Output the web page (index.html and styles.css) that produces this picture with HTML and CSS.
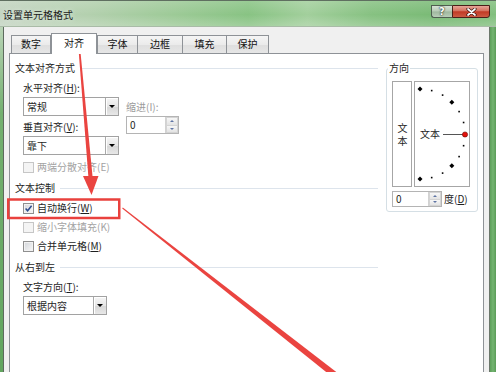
FILE: index.html
```html
<!DOCTYPE html>
<html lang="zh-CN">
<head>
<meta charset="utf-8">
<title>设置单元格格式</title>
<link rel="stylesheet" href="styles.css">
</head>
<body>
<div class="window">
  <div class="titlebar">
    <span class="title">设置单元格格式</span>
    <div class="caption">
      <span class="btn-help">?</span>
      <span class="btn-close">
        <svg width="11" height="8" viewBox="0 0 11 8"><path d="M2 1 L9 7 M9 1 L2 7" stroke="#3a1510" stroke-width="3.2" stroke-linecap="round"/><path d="M2 1 L9 7 M9 1 L2 7" stroke="#fff" stroke-width="1.7" stroke-linecap="round"/></svg>
      </span>
    </div>
  </div>
  <div class="frame">
    <div class="edge-left"></div>
    <div class="client">
      <div class="tabs">
        <span class="tab t1">数字</span>
        <span class="tab t2 active">对齐</span>
        <span class="tab t3">字体</span>
        <span class="tab t4">边框</span>
        <span class="tab t5">填充</span>
        <span class="tab t6">保护</span>
      </div>
      <div class="panel">
        <div class="left-col">
          <div class="sec-head"><span>文本对齐方式</span><i class="rule"></i></div>
          <div class="align-grid">
            <div class="col-a">
              <div class="lbl">水平对齐(<u>H</u>):</div>
              <div class="combo mt3"><span class="combo-text">常规</span><span class="combo-btn"></span></div>
              <div class="lbl mt5">垂直对齐(<u>V</u>):</div>
              <div class="combo mt3"><span class="combo-text">靠下</span><span class="combo-btn"></span></div>
              <div class="check disabled mt6"><span class="box"></span><span>两端分散对齐(E)</span></div>
            </div>
            <div class="col-b">
              <div class="lbl dim">缩进(I):</div>
              <div class="spin indent-spin mt3"><span class="spin-text">0</span><span class="spin-btns"><i class="up"></i><i class="down"></i></span></div>
            </div>
          </div>
          <div class="sec-head mt9"><span>文本控制</span><i class="rule"></i></div>
          <div class="check indent mt8"><span class="box checked"><svg width="9" height="9" viewBox="0 0 9 9"><path d="M1.6 4.6 L3.6 6.8 L7.6 1.8" fill="none" stroke="#2d4b8e" stroke-width="1.5"/></svg></span><span>自动换行(<u>W</u>)</span></div>
          <div class="check indent disabled mt7"><span class="box"></span><span>缩小字体填充(K)</span></div>
          <div class="check indent mt7"><span class="box"></span><span>合并单元格(<u>M</u>)</span></div>
          <div class="sec-head mt9"><span>从右到左</span><i class="rule"></i></div>
          <div class="lbl indent mt8">文字方向(<u>T</u>):</div>
          <div class="combo indent dir-combo mt3"><span class="combo-text">根据内容</span><span class="combo-btn"></span></div>
        </div>
        <fieldset class="orient">
          <legend>方向</legend>
          <div class="orient-row">
            <div class="vbox"><span class="vtext">文本</span></div>
            <div class="arcbox">
              <svg width="54" height="104" viewBox="0 0 54 104">
                <text x="5" y="56" font-size="10" fill="#1e1e1e">文本</text>
                <line x1="28" y1="52.5" x2="48" y2="52.5" stroke="#555" stroke-width="1"/>
                <g fill="#000">
                  <path d="M5 4.5 L7.5 7 L5 9.5 L2.5 7Z"/>
                  <path d="M36.8 17.7 L39.3 20.2 L36.8 22.7 L34.3 20.2Z"/>
                  <path d="M36.8 81.3 L39.3 83.8 L36.8 86.3 L34.3 83.8Z"/>
                  <path d="M5 94.5 L7.5 97 L5 99.5 L2.5 97Z"/>
                  <rect x="15.9" y="7.8" width="1.6" height="1.6"/>
                  <rect x="26.8" y="12.3" width="1.6" height="1.6"/>
                  <rect x="43.3" y="28.8" width="1.6" height="1.6"/>
                  <rect x="47.8" y="39.7" width="1.6" height="1.6"/>
                  <rect x="47.8" y="62.9" width="1.6" height="1.6"/>
                  <rect x="43.3" y="73.8" width="1.6" height="1.6"/>
                  <rect x="26.8" y="90.3" width="1.6" height="1.6"/>
                  <rect x="15.9" y="94.8" width="1.6" height="1.6"/>
                </g>
                <circle cx="50" cy="52.5" r="2.6" fill="#e3120c" stroke="#6a0c08" stroke-width="0.6"/>
              </svg>
            </div>
          </div>
          <div class="deg-row">
            <div class="spin deg-spin"><span class="spin-text">0</span><span class="spin-btns"><i class="up"></i><i class="down"></i></span></div>
            <span>度(<u>D</u>)</span>
          </div>
        </fieldset>
      </div>
    </div>
    <div class="edge-right"></div>
  </div>
</div>
<svg class="annot" width="496" height="372" viewBox="0 0 496 372">
  <rect x="8.25" y="199.5" width="111" height="18.5" fill="none" stroke="#e9413d" stroke-width="2.5"/>
  <polygon points="78.2,45 79.8,45 92.6,177 88.4,177" fill="#ea4440"/>
  <polygon points="83,176 98.5,176 91.5,195" fill="#ea4440"/>
  <polygon points="122.8,207.6 344.6,378.4 340.6,383.6 122.2,208.4" fill="#ea4440"/>
</svg>
</body>
</html>
```
FILE: styles.css
```css
* { box-sizing: border-box; }
html, body { margin: 0; padding: 0; }
body {
  width: 496px;
  height: 372px;
  overflow: hidden;
  position: relative;
  font-family: "Noto Sans CJK SC", "Noto Sans", sans-serif;
  font-size: 10px;
  line-height: 12px;
  color: #1e1e1e;
  background: #f0f0f0;
}
u { text-decoration: underline; text-underline-offset: 1px; }

.window { display: flex; flex-direction: column; width: 496px; height: 372px; }

.titlebar {
  flex: none;
  height: 27px;
  display: flex;
  align-items: flex-start;
  border-top: 1px solid #5f6f60;
  border-bottom: 1px solid #a9bba7;
  background:
    linear-gradient(to bottom, rgba(255,255,255,0.15), rgba(255,255,255,0) 55%, rgba(255,255,255,0.2)),
    linear-gradient(to right, #c3d4c1 0%, #b3d0ae 18%, #9dca97 35%, #88c383 50%, #a2cf9c 62%, #86c181 75%, #79ba75 88%, #82bf7e 100%);
}
.title {
  margin: 8px 0 0 3px;
  color: #1a1a1a;
  text-shadow: 0 0 5px rgba(255,255,255,0.7);
}
.caption { margin: 4px 6px 0 auto; display: flex; }
.btn-help {
  width: 21px;
  height: 13px;
  border: 1px solid #4f5e50;
  border-right: none;
  border-radius: 0 0 0 3px;
  background: linear-gradient(#d6e2d5, #b7cab6 48%, #9fb79e 52%, #b9cdb8);
  color: #fff;
  font: bold 10px/11px "DejaVu Sans", sans-serif;
  text-align: center;
  text-shadow: 0 0 2px #1c2a1c, 0 0 1px #1c2a1c;
}
.btn-close {
  width: 38px;
  height: 13px;
  border: 1px solid #4a1f18;
  border-radius: 0 0 3px 0;
  background: linear-gradient(#e6a597, #d4705d 45%, #c13a25 52%, #cc5a43);
  display: flex;
  align-items: center;
  justify-content: center;
}

.frame { flex: 1; display: flex; min-height: 0; }
.edge-left {
  flex: none;
  width: 4px;
  border-right: 1px solid #5d6a5e;
  background: linear-gradient(#b9d4b6, #74b070 25%, #62a55f);
}
.edge-right {
  flex: none;
  width: 7px;
  border-left: 1px solid #6b776b;
  background: linear-gradient(to right, #5c9f59, #74b471 50%, #5a9c57);
}
.client {
  flex: 1;
  background: #f0f0f0;
  padding: 6px 5px 0 5px;
  display: flex;
  flex-direction: column;
}

.tabs {
  display: flex;
  align-items: flex-end;
  height: 20px;
  padding-left: 2px;
}
.tab {
  height: 18px;
  line-height: 16px;
  text-align: center;
  border: 1px solid #8e9297;
  border-bottom: none;
  background: linear-gradient(#f5f5f5, #ebebeb 50%, #dedede 51%, #e6e6e6);
  color: #111;
}
.tab.t4, .tab.t5, .tab.t6 { border-left: none; }
.tab.active {
  position: relative;
  z-index: 1;
  height: 21px;
  line-height: 18px;
  margin-bottom: -1px;
  background: #fff;
}
.t1 { width: 40px; }
.t2 { width: 46px; }
.t3 { width: 41px; }
.t4 { width: 45px; }
.t5 { width: 44px; }
.t6 { width: 42px; }

.panel {
  flex: none;
  height: 330px;
  background: #fff;
  border: 1px solid #8e9297;
  padding: 8px 5px 0 5px;
  display: grid;
  grid-template-columns: 363px 92px;
  column-gap: 8px;
  align-items: start;
}

.sec-head { display: flex; align-items: center; gap: 5px; height: 12px; }
.sec-head .rule { flex: 1; height: 1px; background: #dde4ec; }

.lbl { height: 12px; white-space: nowrap; }
.dim { color: #9b9b9b; }
.indent { margin-left: 8px; }
.mt3 { margin-top: 3px; }
.mt5 { margin-top: 5px; }
.mt6 { margin-top: 6px; }
.mt7 { margin-top: 7px; }
.mt8 { margin-top: 8px; }
.mt9 { margin-top: 9px; }

.align-grid { display: flex; gap: 7px; margin: 8px 0 0 8px; }
.col-a { width: 96px; }
.col-b { padding-top: 19px; }

.combo {
  display: flex;
  height: 19px;
  border: 1px solid #a2a2a2;
  background: #fff;
}
.dir-combo { width: 84px; }
.combo-text { flex: 1; padding-left: 3px; line-height: 17px; }
.combo-btn {
  width: 13px;
  border-left: 1px solid #a9a9a9;
  background: linear-gradient(#f6f6f6, #e6e6e6 50%, #d6d6d6 51%, #e8e8e8);
  box-shadow: inset 1px 1px 0 #fff;
  display: flex;
  align-items: center;
  justify-content: center;
}
.combo-btn::after {
  content: "";
  border-left: 3px solid transparent;
  border-right: 3px solid transparent;
  border-top: 3px solid #000;
}

.spin {
  display: flex;
  border: 1px solid #b4b4b4;
  background: #fff;
}
.indent-spin { width: 53px; height: 18px; }
.deg-spin { width: 50px; height: 16px; }
.spin-text { flex: 1; padding-left: 3px; line-height: 14px; }
.indent-spin .spin-text { line-height: 16px; }
.spin-btns {
  width: 13px;
  display: flex;
  flex-direction: column;
  border-left: 1px solid #d2d2d2;
}
.spin-btns i {
  flex: 1;
  display: flex;
  align-items: center;
  justify-content: center;
  background: linear-gradient(#f7f7f7, #e3e3e3);
  border: 1px solid #d4d4d4;
}
.spin-btns i + i { border-top: none; }
.spin-btns .up::after {
  content: "";
  border-left: 2px solid transparent;
  border-right: 2px solid transparent;
  border-bottom: 2px solid #5e74a4;
}
.spin-btns .down::after {
  content: "";
  border-left: 2px solid transparent;
  border-right: 2px solid transparent;
  border-top: 2px solid #5e74a4;
}

.check { display: flex; align-items: center; gap: 3px; height: 12px; white-space: nowrap; }
.check .box {
  flex: none;
  width: 11px;
  height: 11px;
  border: 1px solid #8f8f8f;
  background: linear-gradient(135deg, #d2d5da, #f8f8f8);
  box-shadow: inset 0 0 0 1px #f2f2f2;
  display: flex;
  align-items: center;
  justify-content: center;
}
.check.disabled { color: #a3a3a3; }
.check.disabled .box {
  border-color: #c6c6c6;
  background: #f4f4f4;
  box-shadow: none;
}

.orient {
  margin: 0;
  padding: 7px 5px 4px 5px;
  border: 1px solid #d5dfe5;
  border-radius: 3px;
  min-width: 0;
}
.orient legend {
  padding: 0 1px;
  margin-left: -4px;
  line-height: 12px;
}
.orient-row { display: flex; gap: 2px; }
.vbox {
  width: 20px;
  height: 106px;
  border: 1px solid #a6a6a6;
  display: flex;
  align-items: center;
  justify-content: center;
}
.vtext {
  writing-mode: vertical-rl;
  text-orientation: upright;
  letter-spacing: 3px;
  line-height: 12px;
  margin-top: 3px;
}
.arcbox {
  width: 56px;
  height: 106px;
  border: 1px solid #a6a6a6;
}
.arcbox svg { display: block; }
.deg-row { display: flex; align-items: center; gap: 2px; margin-top: 4px; }

.annot {
  position: absolute;
  left: 0;
  top: 0;
  width: 496px;
  height: 372px;
  pointer-events: none;
}
```
